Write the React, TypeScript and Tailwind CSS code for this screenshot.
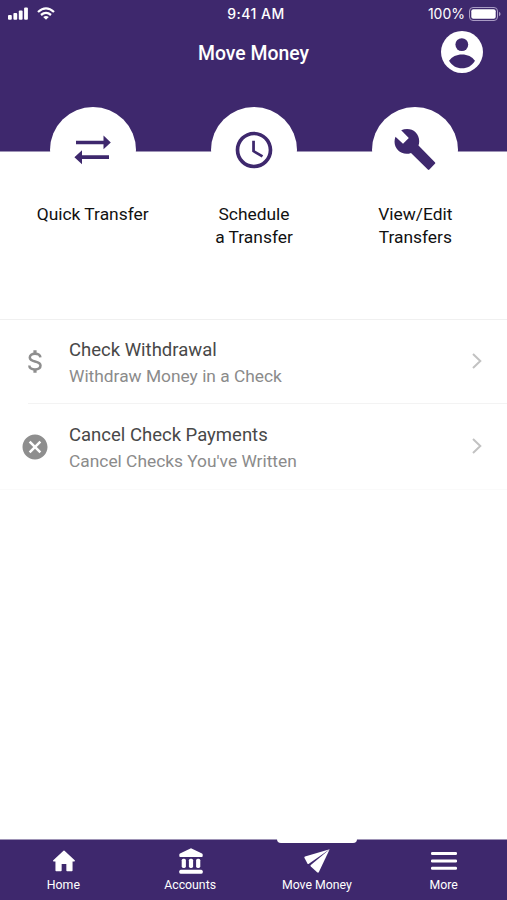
import React from "react";
import { MdCancel, MdSchedule } from "react-icons/md";

interface Action {
  lines: string[];
  icon: React.ReactNode;
}

interface Row {
  title: string;
  subtitle: string;
  icon: React.ReactNode;
}

interface Tab {
  label: string;
  icon: React.ReactNode;
  active?: boolean;
}

const SwapIcon = () => (
  <svg className="w-[38px] h-[30px]" viewBox="0 0 38 30" fill="currentColor">
    <path d="M2 5.700H29.500V0.500L36.800 7.400 29.500 14.300V9.300H2z" />
    <path d="M35 20.300H8V15.300L0.400 22.200 8 29.200V24H35z" />
  </svg>
);

const WrenchIcon = () => (
  <svg className="w-[42px] h-[42px]" viewBox="0 0 42 42" fill="currentColor">
    <path d="M7.200 1.300C12-.8 18-.3 21.500 3.200c3.600 3.500 4.500 8.800 3 13.200L40.900 33.200q.8.800 0 1.600l-5.500 5.700q-.8.800-1.600 0L17 23.900C12.500 25.800 7.300 24.600 4 21.300.4 17.700-.3 12.500 1.500 7.700L9 14.700 14.800 8.900z" />
  </svg>
);

const DollarIcon = () => (
  <svg className="w-[14px] h-[23px]" viewBox="0 0 14 23" fill="none" stroke="currentColor" strokeWidth="2.500">
    <path d="M12.400 7.300C12.200 4.900 10.200 3.700 7 3.700S1.800 5.200 1.800 7.500C1.800 10 4 10.800 7 11.500s5.500 1.500 5.500 4.100c0 2.300-2.100 3.800-5.500 3.800S1.400 18 1.300 15.500" />
    <path d="M7 0.300V4M7 19V22.700" strokeWidth="3.200" />
  </svg>
);

const ProfileIcon = () => (
  <svg className="w-[42px] h-[42px]" viewBox="0 0 42 42">
    <circle cx="21" cy="21" r="21" fill="#fff" />
    <circle cx="20.8" cy="13.6" r="6.4" fill="#3e286d" />
    <path d="M8 29.800c3-4.300 7.500-6.400 13-6.400s10 2.100 13 6.400c-3 5-7.500 7.500-13 7.500s-10-2.500-13-7.500z" fill="#3e286d" />
  </svg>
);

const HomeIcon = () => (
  <svg className="w-6 h-[22px] ml-px" viewBox="0 0 24 22" fill="currentColor" stroke="currentColor" strokeWidth="1.500" strokeLinejoin="round">
    <path d="M12 1.400L1.800 10.700H4.200V20.500H8.900V13.200H15.100V20.500H19.800V10.700H22.200z" />
  </svg>
);

const BankIcon = () => (
  <svg className="w-6 h-[26px] ml-px" viewBox="0 0 24 26" fill="currentColor">
    <path d="M12 0.300L23 5.500q.7.400.7 1.200V8q0 .9-.9.900H1.200Q.3 8.900.3 8V6.700q0-.8.7-1.200z" />
    <rect x="2.700" y="10.700" width="4.200" height="9.200" rx="1.600" />
    <rect x="9.900" y="10.700" width="4.200" height="9.200" rx="1.600" />
    <rect x="17.100" y="10.700" width="4.200" height="9.200" rx="1.600" />
    <rect x="0.300" y="21.700" width="23.400" height="4" rx="1.500" />
  </svg>
);

const PlaneIcon = () => (
  <svg className="w-[26px] h-6" viewBox="0 0 26 24" fill="currentColor">
    <path d="M25.700 0.200L1 7.400q-1 .4-.6 1.300l3 5.700q.6.900 1.500.3z" />
    <path d="M25.700 0.200L6.800 16q-.7.700 0 1.400l6.300 5.900q1.100.8 1.800-.2z" />
  </svg>
);

const MenuIcon = () => (
  <svg className="w-[26px] h-[18px]" viewBox="0 0 26 18" fill="currentColor">
    <rect y="0" width="26" height="3" rx="1.200" />
    <rect y="7.400" width="26" height="3" rx="1.200" />
    <rect y="14.800" width="26" height="3" rx="1.200" />
  </svg>
);

const actions: Action[] = [
  { lines: ["Quick Transfer"], icon: <SwapIcon /> },
  { lines: ["Schedule", "a Transfer"], icon: <MdSchedule size={44} /> },
  { lines: ["View/Edit", "Transfers"], icon: <WrenchIcon /> },
];

const rows: Row[] = [
  {
    title: "Check Withdrawal",
    subtitle: "Withdraw Money in a Check",
    icon: <DollarIcon />,
  },
  {
    title: "Cancel Check Payments",
    subtitle: "Cancel Checks You've Written",
    icon: <MdCancel size={30} />,
  },
];

const tabs: Tab[] = [
  { label: "Home", icon: <HomeIcon /> },
  { label: "Accounts", icon: <BankIcon /> },
  { label: "Move Money", icon: <PlaneIcon />, active: true },
  { label: "More", icon: <MenuIcon /> },
];

const StatusBar = () => (
  <div className="grid grid-cols-[1fr_auto_1fr] items-center h-[27px] pl-2 pr-[6px] text-white">
    <div className="flex items-center gap-[9px]">
      <svg className="w-5 h-[13px]" viewBox="0 0 20 13" fill="currentColor">
        <rect x="0" y="8" width="3.800" height="4.700" rx="1" />
        <rect x="5.400" y="6" width="3.800" height="6.700" rx="1" />
        <rect x="10.800" y="3.500" width="3.800" height="9.200" rx="1" />
        <rect x="16.100" y="0.500" width="3.800" height="12.200" rx="1" />
      </svg>
      <svg className="w-[18px] h-[13px]" viewBox="0 0 18 13" fill="none" stroke="currentColor" strokeWidth="2.300">
        <path d="M1 5Q9-2.200 17 5" />
        <path d="M4 8Q9 3.800 14 8" />
        <path d="M9 12.800L6.200 9.900Q9 7.900 11.800 9.900z" fill="currentColor" stroke="none" />
      </svg>
    </div>
    <span className="ml-[3px] font-[Inter] font-medium text-[14px] tracking-[0.5px]">9:41 AM</span>
    <div className="flex items-center justify-end gap-1">
      <span className="font-[Inter] text-[14px]">100%</span>
      <svg className="w-8 h-[14px]" viewBox="0 0 32 14">
        <rect x="0.500" y="0.500" width="28" height="13" rx="3.500" fill="none" stroke="#a99bc4" />
        <rect x="2.300" y="2.300" width="24.400" height="9.400" rx="2" fill="#fff" />
        <path d="M30 4.800q1.600.7 1.600 2.200T30 9.200z" fill="#a99bc4" />
      </svg>
    </div>
  </div>
);

export default function App() {
  return (
    <div className="flex flex-col w-full h-[900px] bg-white font-[Roboto,sans-serif] overflow-hidden">
      <header className="h-[152px] shrink-0 border-b border-[#9e93b6] bg-[#3e286d]">
        <StatusBar />
        <div className="grid grid-cols-[1fr_auto_1fr] items-center h-[50px] pr-6">
          <h1 className="col-start-2 pt-[3px] pl-6 text-[19.4px] font-medium text-white">Move Money</h1>
          <div className="justify-self-end">
            <ProfileIcon />
          </div>
        </div>
      </header>

      <section className="grid grid-cols-3 h-[167px] shrink-0 pl-3 pr-[11px]">
        {actions.map((action) => (
          <div key={action.lines[0]} className="flex flex-col items-center -mt-[45px]">
            <div className="flex items-center justify-center w-[86px] h-[86px] rounded-full bg-white text-[#3e286d]">
              {action.icon}
            </div>
            <div className="mt-[10px] text-center text-[17.4px] leading-[22.5px] text-[#111]">
              {action.lines.map((line) => (
                <div key={line}>{line}</div>
              ))}
            </div>
          </div>
        ))}
      </section>

      <ul className="flex-1 border-t border-[#f0f0f0]">
        {rows.map((row, i) => (
          <li
            key={row.title}
            className={i === 0 ? "h-[84px] pl-7" : "h-[86px] pl-7 border-b border-[#fafafa]"}
          >
            <div className={`flex h-full items-center pr-[25px] ${i === 0 ? "border-b border-[#f3f3f3]" : ""}`}>
              <div className="flex justify-center -ml-2 w-[30px] text-[#8e8e8e]">{row.icon}</div>
              <div className="flex-1 ml-[19px] pt-[3px]">
                <div className="text-[18.5px] leading-[26px] text-[#484848]">{row.title}</div>
                <div className="text-[17.35px] leading-[26px] text-[#8b8b8b]">{row.subtitle}</div>
              </div>
              <svg className="w-[10px] h-4 mb-px" viewBox="0 0 10 16" fill="none" stroke="#c2c2c2" strokeWidth="2">
                <path d="M1 1l7.300 7L1 15" />
              </svg>
            </div>
          </li>
        ))}
      </ul>

      <nav className="grid grid-cols-4 h-[61px] shrink-0 border-t border-[#9e93b6] bg-[#3e286d] text-white">
        {tabs.map((tab) => (
          <div key={tab.label} className="relative flex flex-col items-center pt-2">
            {tab.active && <div className="absolute -top-px w-20 h-1 rounded-b bg-white" />}
            <div className="flex items-center justify-center h-[26px]">{tab.icon}</div>
            <span className="mt-[3px] text-[12.3px] leading-4">{tab.label}</span>
          </div>
        ))}
      </nav>
    </div>
  );
}
